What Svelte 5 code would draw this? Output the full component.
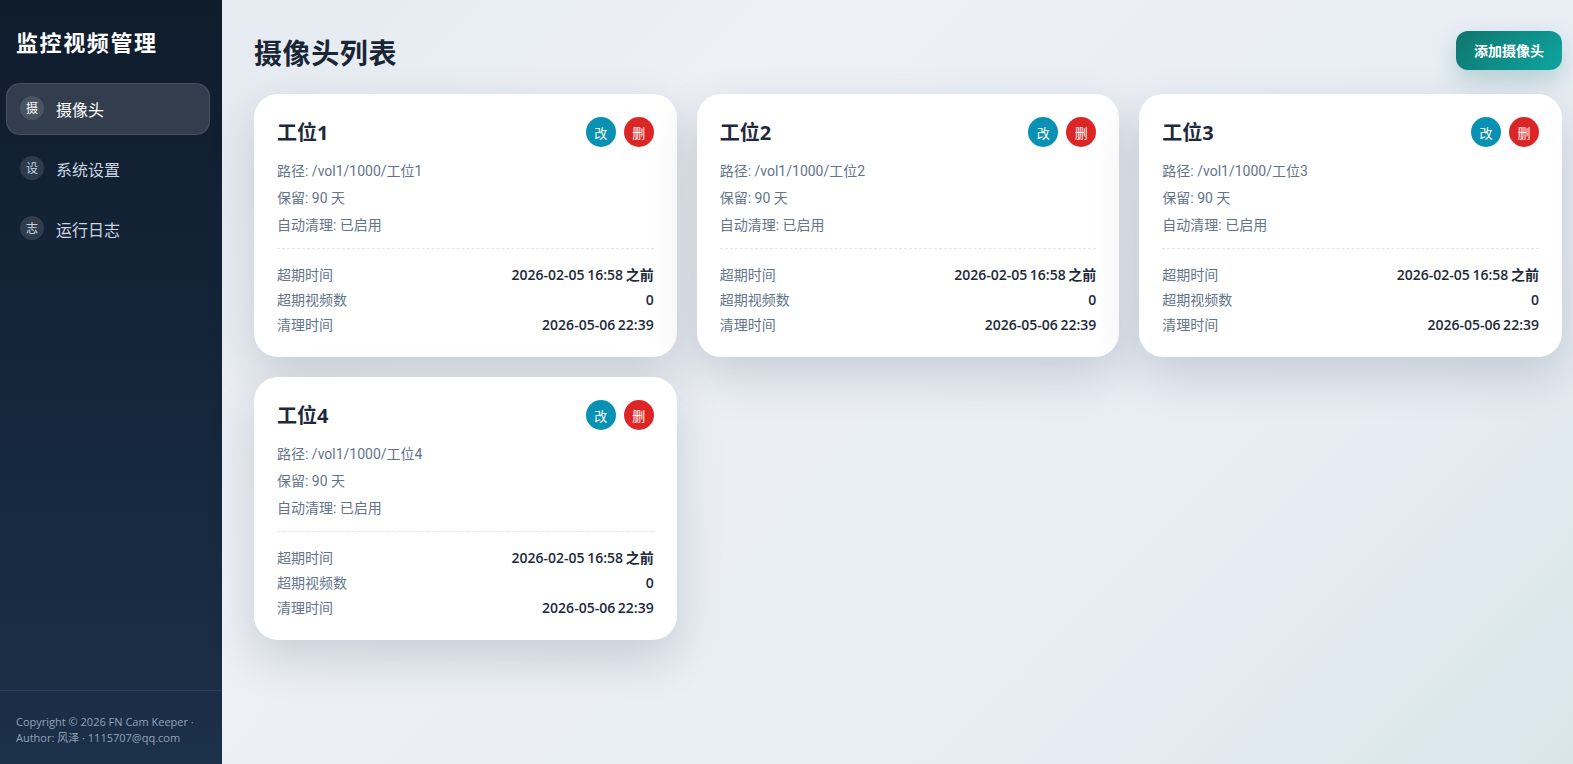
<script>
  const nav = [
    { icon: "摄", label: "摄像头", active: true },
    { icon: "设", label: "系统设置" },
    { icon: "志", label: "运行日志" }
  ];

  const cameras = [1, 2, 3, 4].map((n) => ({
    id: n,
    name: `工位${n}`,
    path: `/vol1/1000/工位${n}`,
    retain: 90,
    expire: "2026-02-05 16:58 之前",
    count: 0,
    cleaned: "2026-05-06 22:39"
  }));
</script>

<div class="layout">
  <aside class="sidebar">
    <h1 class="brand">监控视频管理</h1>
    <nav class="menu">
      {#each nav as item}
        <div class="menu-item" class:active={item.active}>
          <span class="menu-icon">{item.icon}</span>
          <span>{item.label}</span>
        </div>
      {/each}
    </nav>
    <footer class="copy">Copyright © 2026 FN Cam Keeper · Author: 风泽 · 1115707@qq.com</footer>
  </aside>

  <main class="main">
    <header class="head">
      <h2>摄像头列表</h2>
      <button class="add">添加摄像头</button>
    </header>

    <section class="grid">
      {#each cameras as cam (cam.id)}
        <article class="card">
          <div class="card-head">
            <h3>{cam.name}</h3>
            <div class="actions">
              <button class="round edit">改</button>
              <button class="round del">删</button>
            </div>
          </div>
          <p>路径: {cam.path}</p>
          <p>保留: {cam.retain} 天</p>
          <p>自动清理: 已启用</p>
          <div class="stats">
            <div class="row"><span>超期时间</span><b>{cam.expire}</b></div>
            <div class="row"><span>超期视频数</span><b>{cam.count}</b></div>
            <div class="row"><span>清理时间</span><b>{cam.cleaned}</b></div>
          </div>
        </article>
      {/each}
    </section>
  </main>
</div>

<style>
  :global(body) {
    margin: 0;
    font-family: "Open Sans", "Noto Sans CJK SC", sans-serif;
  }

  .layout {
    display: flex;
    height: 764px;
    overflow: hidden;
    background: linear-gradient(135deg, #e2e8ee 0%, #edf1f6 35%, #e8edf4 75%, #d8e6ea 100%);
  }

  .sidebar {
    width: 222px;
    flex: none;
    display: flex;
    flex-direction: column;
    background: linear-gradient(180deg, #0f1c2c 0%, #1b3049 100%);
    color: #fff;
  }

  .brand {
    margin: 0;
    padding: 26px 16px 0;
    font-size: 22px;
    line-height: 32px;
    font-weight: 700;
    letter-spacing: 1.6px;
  }

  .menu {
    margin-top: 25px;
    padding: 0 12px 0 6px;
    display: flex;
    flex-direction: column;
    gap: 8px;
  }

  .menu-item {
    box-sizing: border-box;
    display: flex;
    align-items: center;
    gap: 12px;
    height: 52px;
    padding: 0 13px;
    border: 1px solid transparent;
    border-radius: 14px;
    font-size: 16px;
    color: #cbd5e1;
  }

  .menu-item.active {
    color: #fff;
    background: rgba(255, 255, 255, 0.14);
    border-color: rgba(255, 255, 255, 0.1);
  }

  .menu-icon {
    width: 24px;
    height: 24px;
    border-radius: 50%;
    display: flex;
    align-items: center;
    justify-content: center;
    font-size: 12px;
    background: rgba(255, 255, 255, 0.12);
    margin-top: -2px;
  }

  .copy {
    margin-top: auto;
    padding: 23px 16px 18px;
    border-top: 1px solid rgba(255, 255, 255, 0.08);
    font-size: 11px;
    line-height: 16px;
    color: #94a3b8;
  }

  .main {
    flex: 1;
    padding: 31px 11px 0 32px;
    min-width: 0;
  }

  .head {
    display: flex;
    justify-content: space-between;
    align-items: center;
    height: 39px;
    margin-bottom: 24px;
  }

  .head h2 {
    margin: 3px 0 0;
    font-size: 28px;
    font-weight: 700;
    letter-spacing: 0.6px;
    color: #1a2536;
  }

  .add {
    width: 106px;
    height: 39px;
    padding: 0 0 2px;
    border: none;
    border-radius: 12px;
    font: 700 14px "Open Sans", "Noto Sans CJK SC", sans-serif;
    color: #fff;
    background: linear-gradient(135deg, #0f766e, #0ea5a0);
    box-shadow: 0 10px 24px rgba(15, 118, 110, 0.25);
  }

  .grid {
    display: grid;
    grid-template-columns: repeat(3, 1fr);
    gap: 20px;
  }

  .card {
    height: 263px;
    box-sizing: border-box;
    padding: 22px 23px;
    background: #fff;
    border-radius: 24px;
    box-shadow: 0 18px 48px rgba(15, 23, 42, 0.16);
  }

  .card-head {
    display: flex;
    justify-content: space-between;
    align-items: center;
    height: 32px;
    margin-bottom: 13px;
  }

  .card-head h3 {
    margin: -2px 0 0;
    font-size: 20px;
    font-weight: 700;
    color: #1e293b;
  }

  .actions {
    display: flex;
    gap: 8px;
  }

  .round {
    width: 30px;
    height: 30px;
    padding: 0;
    border: none;
    border-radius: 50%;
    color: #fff;
    font: 13px "Open Sans", "Noto Sans CJK SC", sans-serif;
  }

  .edit {
    background: #0891b2;
  }

  .del {
    background: #dc2626;
  }

  .card p {
    margin: 0 0 7px;
    font-family: Roboto, "Noto Sans CJK SC", sans-serif;
    font-size: 14px;
    line-height: 20px;
    color: #64748b;
  }

  .stats {
    margin-top: 13px;
    padding-top: 13px;
    border-top: 1px dashed #e2e8f0;
  }

  .row {
    display: flex;
    justify-content: space-between;
    height: 25px;
    line-height: 25px;
    font-size: 14px;
    color: #64748b;
  }

  .row b {
    font-size: 14px;
    font-weight: 600;
    word-spacing: -1px;
    color: #1e293b;
  }
</style>
